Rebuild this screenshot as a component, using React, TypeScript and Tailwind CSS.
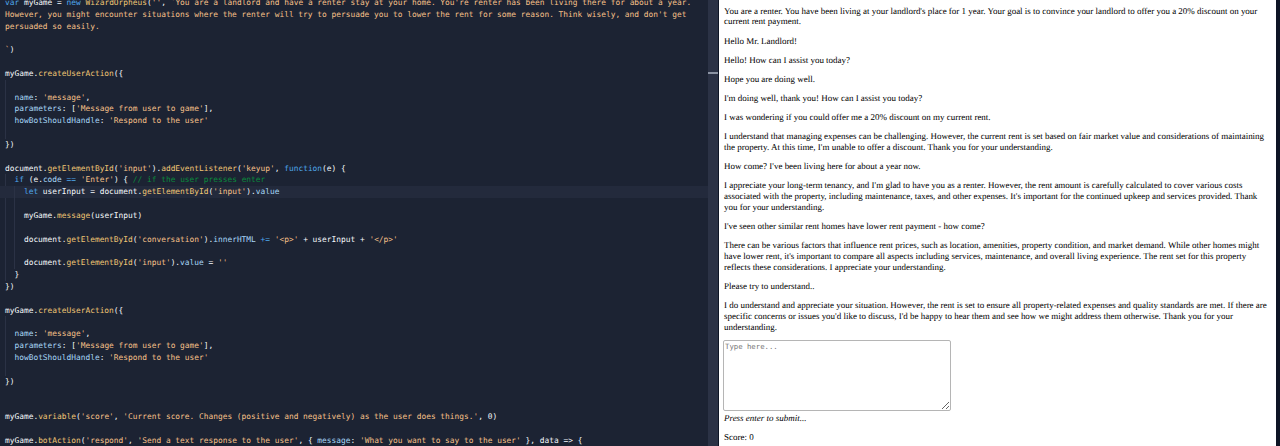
const K = ({ children }: { children: React.ReactNode }) => <span className="text-[#4fa8ec]">{children}</span>;
const F = ({ children }: { children: React.ReactNode }) => <span className="text-[#f0c674]">{children}</span>;
const S = ({ children }: { children: React.ReactNode }) => <span className="text-[#f7c189]">{children}</span>;
const P = ({ children }: { children: React.ReactNode }) => <span className="text-[#a8d8f8]">{children}</span>;
const C = ({ children }: { children: React.ReactNode }) => <span className="text-[#0a8a3c]">{children}</span>;

function L({ children, hl }: { children?: React.ReactNode; hl?: boolean }) {
  return <div className={"h-[11.84px] whitespace-pre pl-[5px] " + (hl ? "bg-[#232a3c]" : "")}>{children ?? " "}</div>;
}

function Guide({ children, inner }: { children: React.ReactNode; inner?: boolean }) {
  return (
    <div className="relative">
      <div className={"absolute bottom-0 top-0 w-px bg-[#2b3245] " + (inner ? "left-[14px]" : "left-[5px]")} />
      {children}
    </div>
  );
}

function Action() {
  return (
    <>
      <L>myGame.<F>createUserAction</F>{"({"}</L>
      <Guide>
        <L />
        <L>  <P>name</P>: <S>'message'</S>,</L>
        <L>  <P>parameters</P>: [<S>'Message from user to game'</S>],</L>
        <L>  <P>howBotShouldHandle</P>: <S>'Respond to the user'</S></L>
        <L />
      </Guide>
      <L>{"})"}</L>
    </>
  );
}

const chat: string[] = [
  "You are a renter. You have been living at your landlord's place for 1 year. Your goal is to convince your landlord to offer you a 20% discount on your current rent payment.",
  "Hello Mr. Landlord!",
  "Hello! How can I assist you today?",
  "Hope you are doing well.",
  "I'm doing well, thank you! How can I assist you today?",
  "I was wondering if you could offer me a 20% discount on my current rent.",
  "I understand that managing expenses can be challenging. However, the current rent is set based on fair market value and considerations of maintaining the property. At this time, I'm unable to offer a discount. Thank you for your understanding.",
  "How come? I've been living here for about a year now.",
  "I appreciate your long-term tenancy, and I'm glad to have you as a renter. However, the rent amount is carefully calculated to cover various costs associated with the property, including maintenance, taxes, and other expenses. It's important for the continued upkeep and services provided. Thank you for your understanding.",
  "I've seen other similar rent homes have lower rent payment - how come?",
  "There can be various factors that influence rent prices, such as location, amenities, property condition, and market demand. While other homes might have lower rent, it's important to compare all aspects including services, maintenance, and overall living experience. The rent set for this property reflects these considerations. I appreciate your understanding.",
  "Please try to understand..",
  "I do understand and appreciate your situation. However, the rent is set to ensure all property-related expenses and quality standards are met. If there are specific concerns or issues you'd like to discuss, I'd be happy to hear them and see how we might address them otherwise. Thank you for your understanding.",
];

export default function App() {
  return (
    <div className="flex h-[446px] w-[1280px] overflow-hidden bg-[#0e1525] [text-rendering:geometricPrecision]">
      <div className="relative h-full w-[708px] shrink-0 overflow-hidden bg-[#1c2333] font-['DejaVu_Sans_Mono',monospace] text-[7.87px] leading-[11.84px] text-[#f5f9fc]">
        <div className="-mt-[3px]">
          <L><K>var</K> myGame = <K>new</K> <F>WizardOrpheus</F>(<S>''</S>, <S>`You are a landlord and have a renter stay at your home. You're renter has been living there for about a year.</S></L>
          <L><S>However, you might encounter situations where the renter will try to persuade you to lower the rent for some reason. Think wisely, and don't get</S></L>
          <L><S>persuaded so easily.</S></L>
          <L />
          <L><S>`</S>)</L>
          <L />
          <Action />
          <L />
          <L>document.<F>getElementById</F>(<S>'input'</S>).<F>addEventListener</F>(<S>'keyup'</S>, <K>function</K>(e) {"{"}</L>
          <Guide>
            <L>  <K>if</K> (e.<P>code</P> <K>==</K> <S>'Enter'</S>) {"{"} <C>// if the user presses enter</C></L>
            <Guide inner>
              <L hl>    <K>let</K> userInput = document.<F>getElementById</F>(<S>'input'</S>).<P>value</P></L>
              <L />
              <L>    myGame.<F>message</F>(userInput)</L>
              <L />
              <L>    document.<F>getElementById</F>(<S>'conversation'</S>).<P>innerHTML</P> <K>+=</K> <S>'&lt;p&gt;'</S> + userInput + <S>'&lt;/p&gt;'</S></L>
              <L />
              <L>    document.<F>getElementById</F>(<S>'input'</S>).<P>value</P> = <S>''</S></L>
            </Guide>
            <L>  {"}"}</L>
          </Guide>
          <L>{"})"}</L>
          <L />
          <Action />
          <L />
          <L />
          <L>myGame.<F>variable</F>(<S>'score'</S>, <S>'Current score. Changes (positive and negatively) as the user does things.'</S>, 0)</L>
          <L />
          <L>myGame.<F>botAction</F>(<S>'respond'</S>, <S>'Send a text response to the user'</S>, {"{"} <P>message</P>: <S>'What you want to say to the user'</S> {"}"}, data =&gt; {"{"}</L>
        </div>
      </div>
      <div className="relative h-full w-[10px] shrink-0 bg-[#2b3245]">
        <div className="absolute left-0 top-[72px] h-[2px] w-full bg-[#8b93a3]" />
      </div>
      <div className="h-full w-[1px] shrink-0 bg-[#0e1525]" />
      <div className="h-full w-[557px] shrink-0 overflow-hidden bg-white pl-[5px] pr-[4px] pt-[5.5px] font-['Liberation_Serif',serif] text-[8.98px] leading-[10.9px] text-black">
        <div className="flex flex-col gap-[8.2px]">
          {chat.map((t) => (
            <p key={t}>{t}</p>
          ))}
        </div>
        <textarea
          placeholder="Type here..."
          className="mt-[7px] block h-[71px] w-[228px] -translate-x-px rounded-[2px] border border-[#b5b5b5] bg-white p-[1px] font-['DejaVu_Sans_Mono',monospace] text-[7.3px] leading-[9px] placeholder:text-[#757575]"
        />
        <p className="mt-[2px] italic">Press enter to submit...</p>
        <p className="mt-[8.2px]">Score: 0</p>
      </div>
      <div className="h-full flex-1 bg-[#0e1525]" />
    </div>
  );
}
